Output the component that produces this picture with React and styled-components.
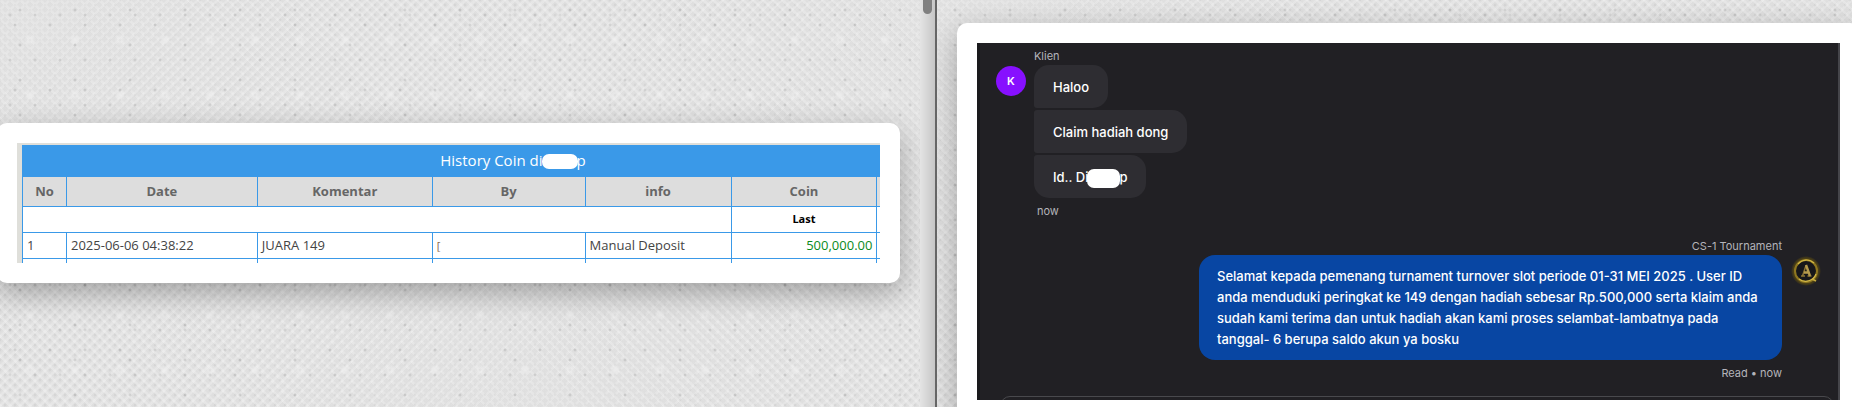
import styled, { createGlobalStyle } from 'styled-components'

const GlobalStyle = createGlobalStyle`
    * {
        box-sizing: border-box;
    }
    body {
        margin: 0;
        overflow: hidden;
        font-family: "Noto Sans", sans-serif;
    }
`

const Page = styled.div`
    display: flex;
    align-items: stretch;
    height: 100vh;
    overflow: hidden;
    background-color: #e5e5e5;
    background-image:
        radial-gradient(circle at 5px 5px, rgba(100,100,100,0.12) 0, rgba(100,100,100,0) 2px),
        radial-gradient(circle at 5px 5px, rgba(100,100,100,0.12) 0, rgba(100,100,100,0) 2px),
        radial-gradient(circle at 20px 10px, rgba(90,90,90,0.25) 0, rgba(90,90,90,0) 2px),
        radial-gradient(circle at 15px 25px, rgba(90,90,90,0.25) 0, rgba(90,90,90,0) 2px),
        radial-gradient(circle at 10px 15px, rgba(90,90,90,0.2) 0, rgba(90,90,90,0) 2px),
        radial-gradient(circle at 30px 40px, rgba(242,242,242,0.7) 0, rgba(242,242,242,0) 6px),
        repeating-linear-gradient(45deg, rgba(255,255,255,0.14) 0 2px, rgba(0,0,0,0.01) 3px 7px),
        repeating-linear-gradient(-45deg, rgba(255,255,255,0.14) 0 2px, rgba(0,0,0,0.01) 3px 7px);
    background-size: 10px 10px, 10px 10px, 55px 35px, 35px 65px, 25px 45px, 45px 55px, auto, auto;
    background-position: 0 0, 5px 5px, 0 0, 0 0, 0 0, 0 0, 0 0, 0 0;
`

const LeftPane = styled.main`
    flex: 920 1 0;
    min-width: 0;
    overflow: hidden;
    display: flex;
    align-items: center;
    padding: 0 20px 2px 0;
`

const RightPane = styled.aside`
    flex: 915 1 0;
    min-width: 0;
    overflow: hidden;
    padding: 23px 0 0 20px;
`

const ScrollTrack = styled.div`
    flex: none;
    width: 17px;
    padding-left: 3px;
    background: linear-gradient(to right, #e4e4e4, #c6c6c6);
    border-right: 2px solid #666;
`

const ScrollThumb = styled.div`
    width: 9px;
    height: 14px;
    border-radius: 0 0 5px 5px;
    background: #808080;
`

const Card = styled.section`
    flex: 1;
    min-width: 0;
    padding: 20px;
    margin-left: ${({ $bleed }) => ($bleed === 'left' ? '-3px' : '0')};
    margin-right: ${({ $bleed }) => ($bleed === 'right' ? '-8px' : '0')};
    border-radius: 10px;
    background: #fff;
    box-shadow: 0 10px 30px rgba(0,0,0,0.3);
`

const HistoryFrame = styled.div`
    height: 120px;
    overflow: hidden;
    padding: 2px 0 0 5px;
    background: #dfdfda;
`

const HistoryTable = styled.table`
    width: 100%;
    table-layout: fixed;
    border-collapse: collapse;
    background: #fff;
    color: #444;
    font-family: "Open Sans", "Noto Sans", sans-serif;
    font-size: 13px;
    line-height: 18px;
    caption {
        height: 31px;
        padding-left: 124px;
        background: #3a99e8;
        color: #fff;
        font-size: 15px;
        line-height: 30px;
    }
    th, td {
        height: 26px;
        padding: 0 4px;
        border: 1px solid #3a99e8;
        white-space: nowrap;
        overflow: hidden;
    }
    thead th {
        height: 30px;
        background: #ddd;
        color: #666;
        text-align: center;
    }
    tr > :last-child {
        padding: 0;
        border-right: 0;
    }
`

const SubHead = styled.th`
    color: #000;
    font-size: 11px;
`

const Amount = styled.td`
    color: #0a8a1c;
    text-align: right;
`

const Remnant = styled.span`
    color: #8a6a4a;
    font-size: 11px;
`

const Masked = styled.span`
    display: inline-block;
    vertical-align: middle;
    width: ${({ $width }) => $width}px;
    height: ${({ $height }) => $height}px;
    margin: 0 -1px;
    border-radius: 7px;
    background: #fff;
`

const Chat = styled.div`
    height: 357px;
    overflow: hidden;
    display: flex;
    flex-direction: column;
    padding-top: 4px;
    border-left: 3px solid #1a1a1d;
    border-right: 2px solid #45454a;
    background: #212024;
    color: #fff;
    font-family: Inter, sans-serif;
    font-size: 13px;
    font-weight: 500;
    line-height: 21px;
`

const Incoming = styled.div`
    display: grid;
    grid-template-columns: 30px 1fr;
    column-gap: 8px;
    padding-left: 16px;
`

const Outgoing = styled.div`
    display: grid;
    grid-template-columns: 1fr 28px;
    column-gap: 10px;
    margin-top: 19px;
    padding-right: 18px;
`

const Stack = styled.div`
    display: flex;
    flex-direction: column;
    align-items: ${({ $end }) => ($end ? 'flex-end' : 'flex-start')};
    gap: 2px;
`

const Meta = styled.div`
    padding-top: 2px;
    font-size: 11px;
    font-weight: 400;
    line-height: 14px;
    color: #b4b4ba;
`

const Stamp = styled(Meta)`
    margin-top: 2px;
    padding-left: 3px;
`

const Avatar = styled.div`
    display: grid;
    place-items: center;
    width: 30px;
    height: 30px;
    margin-top: 19px;
    border-radius: 50%;
    background: #8710ff;
    font-size: 11px;
    font-weight: 600;
`

const Bubble = styled.div`
    padding: 12px 19px 10px;
    border-radius: ${({ $first, $last }) => `${$first ? 15 : 3}px 15px 15px ${$last ? 15 : 3}px`};
    background: #2e2d32;
`

const Reply = styled.div`
    width: 583px;
    max-width: 100%;
    padding: 11px 18px 10px;
    border-radius: 16px;
    background: #0846a3;
`

const Composer = styled.div`
    flex: none;
    height: 20px;
    margin: auto 4px -16px 20px;
    border: 1px solid #49494d;
    border-radius: 16px;
`

const Logo = styled.svg`
    width: 28px;
    height: 28px;
    margin-top: 20px;
    overflow: visible;
`

const messages = [
    { id: 1, text: 'Haloo' },
    { id: 2, text: 'Claim hadiah dong' },
    { id: 3, text: 'Id.. Di', masked: true },
]

const columns = [44, 191, 175, 153, 146, 146, 3]

function History() {
    return (
        <HistoryFrame>
            <HistoryTable>
                <caption>History Coin di<Masked $width={36} $height={15} />p</caption>
                <colgroup>
                    {columns.map((width, i) => <col key={i} style={{ width: `${width / 8.58}%` }} />)}
                </colgroup>
                <thead>
                    <tr>
                        <th>No</th>
                        <th>Date</th>
                        <th>Komentar</th>
                        <th>By</th>
                        <th>info</th>
                        <th>Coin</th>
                        <th />
                    </tr>
                </thead>
                <tbody>
                    <tr>
                        <td colSpan={5} />
                        <SubHead>Last</SubHead>
                        <td />
                    </tr>
                    <tr>
                        <td>1</td>
                        <td>2025-06-06 04:38:22</td>
                        <td>JUARA 149</td>
                        <td><Remnant>[</Remnant></td>
                        <td>Manual Deposit</td>
                        <Amount>500,000.00</Amount>
                        <td />
                    </tr>
                    <tr>
                        {columns.map((width, i) => <td key={i} />)}
                    </tr>
                </tbody>
            </HistoryTable>
        </HistoryFrame>
    )
}

function TournamentLogo() {
    return (
        <Logo viewBox="0 0 28 28" aria-hidden="true">
            <defs>
                <radialGradient id="halo">
                    <stop offset="0.7" stopColor="#5a4c16" />
                    <stop offset="0.88" stopColor="#443a18" />
                    <stop offset="1" stopColor="#212024" />
                </radialGradient>
            </defs>
            <circle cx="14" cy="14" r="15" fill="url(#halo)" />
            <circle cx="14" cy="14" r="11" fill="#17171a" stroke="#8f7720" strokeWidth="2" />
            <path d="M6 7a11 11 0 0 1 16-1M24 17a11 11 0 0 1-17 5" fill="none" stroke="#d3b948" strokeWidth="1.2" />
            <path d="M9 19h4M15.500 19h4M10.500 19 14 8.500" fill="none" stroke="#8c7434" strokeWidth="1.5" />
            <path d="M14 8l4 11M12 15.500h5" fill="none" stroke="#b59a4c" strokeWidth="2.4" />
            <path d="M20 22l4 2" stroke="#c7ab3f" strokeWidth="1.500" />
        </Logo>
    )
}

function App() {
    return (
        <>
            <GlobalStyle />
            <Page>
                <LeftPane>
                    <Card $bleed="left">
                        <History />
                    </Card>
                </LeftPane>
                <ScrollTrack>
                    <ScrollThumb />
                </ScrollTrack>
                <RightPane>
                    <Card $bleed="right">
                        <Chat>
                            <Incoming>
                                <Avatar>K</Avatar>
                                <Stack>
                                    <Meta>Klien</Meta>
                                    {messages.map((message, i) => (
                                        <Bubble key={message.id} $first={i === 0} $last={i === messages.length - 1}>
                                            {message.text}
                                            {message.masked && <><Masked $width={33} $height={19} />p</>}
                                        </Bubble>
                                    ))}
                                    <Stamp>now</Stamp>
                                </Stack>
                            </Incoming>
                            <Outgoing>
                                <Stack $end>
                                    <Meta>CS-1 Tournament</Meta>
                                    <Reply>
                                        Selamat kepada pemenang turnament turnover slot periode 01-31 MEI 2025 . User ID
                                        anda menduduki peringkat ke 149 dengan hadiah sebesar Rp.500,000 serta klaim anda
                                        sudah kami terima dan untuk hadiah akan kami proses selambat-lambatnya pada
                                        tanggal- 6 berupa saldo akun ya bosku
                                    </Reply>
                                    <Stamp>Read • now</Stamp>
                                </Stack>
                                <TournamentLogo />
                            </Outgoing>
                            <Composer />
                        </Chat>
                    </Card>
                </RightPane>
            </Page>
        </>
    )
}

export default App
